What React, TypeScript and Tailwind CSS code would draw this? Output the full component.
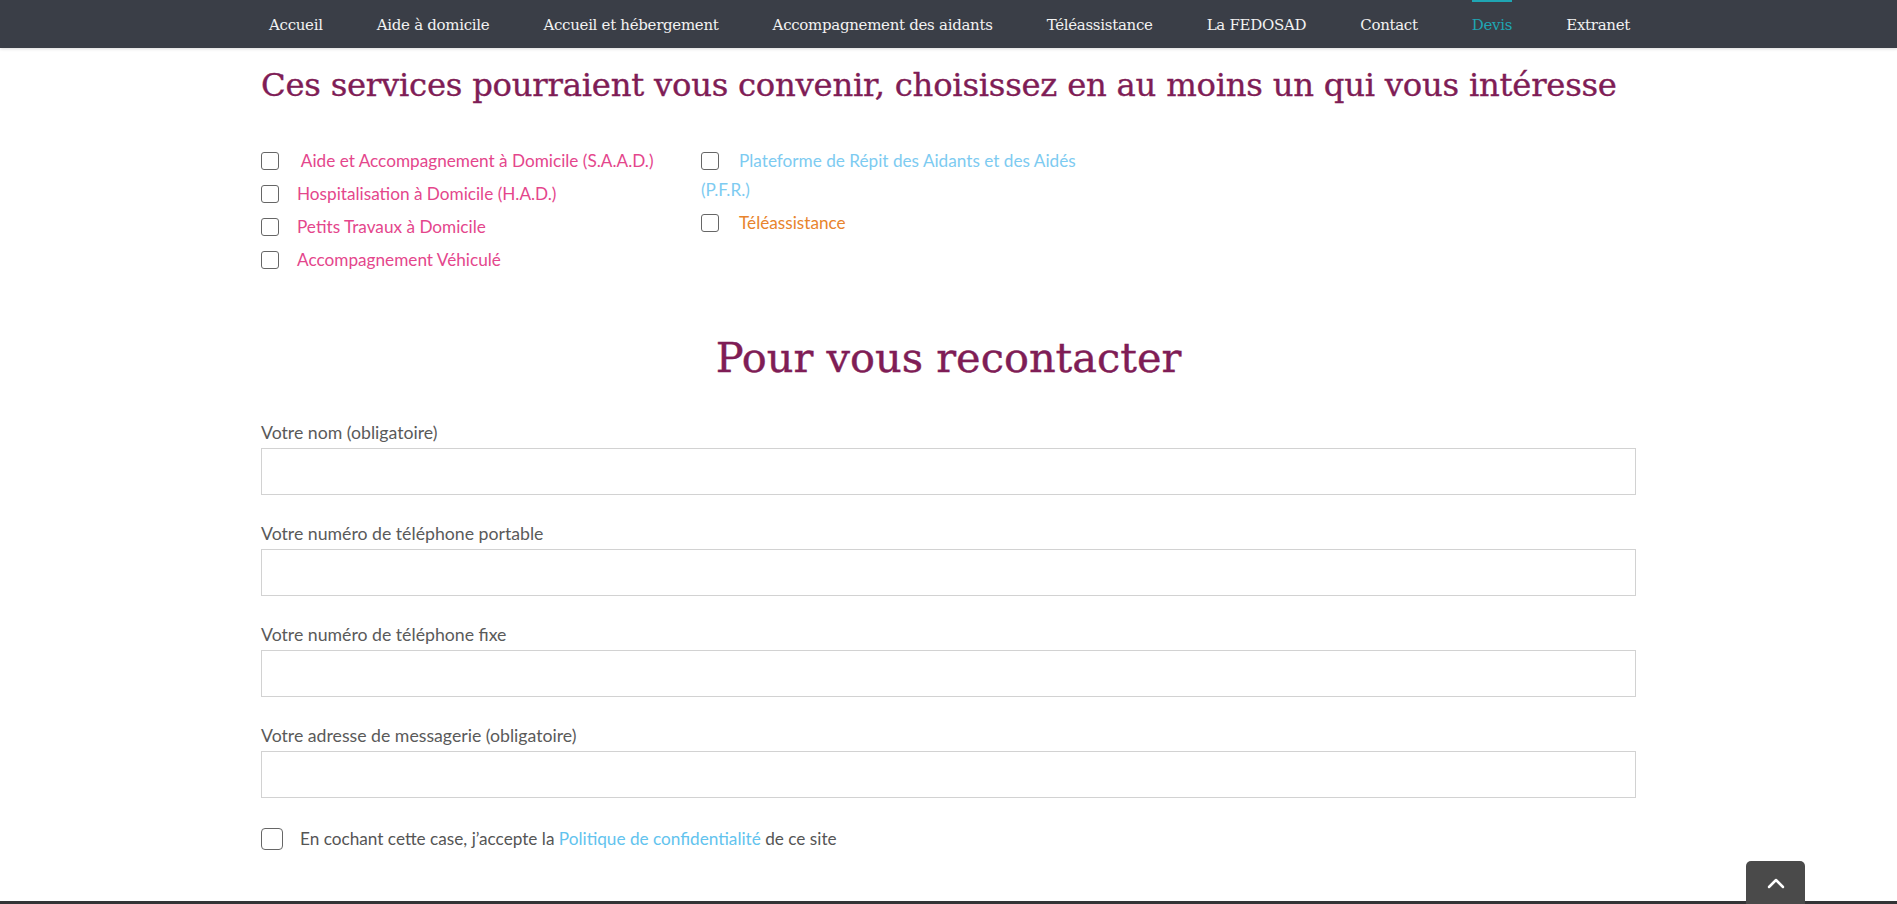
import React from "react";

const slab = { fontFamily: '"DejaVu Serif", "Liberation Serif", serif' };
const lato = { fontFamily: 'Lato, "Noto Sans", sans-serif' };

const navItems = [
  "Accueil",
  "Aide à domicile",
  "Accueil et hébergement",
  "Accompagnement des aidants",
  "Téléassistance",
  "La FEDOSAD",
  "Contact",
  "Devis",
  "Extranet",
];

function Box({ big }: { big?: boolean }) {
  return (
    <span
      className={
        big
          ? "inline-block w-[22px] h-[22px] shrink-0 rounded-[4px] border border-[#666] bg-white"
          : "inline-block w-[18px] h-[18px] shrink-0 rounded-[3px] border border-[#666] bg-white"
      }
    />
  );
}

function Field({ label }: { label: string }) {
  return (
    <div className="flex flex-col">
      <label className="text-[17.7px] leading-[22px] text-[#5a5a5a] mb-[4px]" style={lato}>
        {label}
      </label>
      <input className="h-[47px] w-full border border-[#d2d2d2] bg-white outline-none" />
    </div>
  );
}

export default function App() {
  return (
    <div className="min-h-[904px] bg-white relative overflow-hidden" style={lato}>
      <nav className="h-[48px] bg-[#3a3e47] shadow-[0_1px_3px_rgba(0,0,0,0.15)]">
        <ul className="ml-[269px] w-[1361px] h-full flex justify-between items-center pt-[2px]">
          {navItems.map((n) => (
            <li
              key={n}
              className={
                n === "Devis"
                  ? "relative h-full flex items-center text-[15px] text-[#1fa5b3]"
                  : "relative h-full flex items-center text-[15px] text-[#f2f2f2]"
              }
              style={{ ...slab, letterSpacing: "-0.3px" }}
            >
              {n === "Devis" && <span className="absolute -top-[2px] left-0 right-0 h-[2px] bg-[#1fa5b3]" />}
              {n}
            </li>
          ))}
        </ul>
      </nav>

      <main className="w-[1375px] mx-auto">
        <h2
          className="mt-[16px] text-[32.3px] leading-[42px] text-[#7f1d56] [-webkit-text-stroke:0.35px_#7f1d56]"
          style={{ ...slab, letterSpacing: "-0.25px" }}
        >
          Ces services pourraient vous convenir, choisissez en au moins un qui vous intéresse
        </h2>

        <div className="mt-[40px] flex gap-[20px] text-[17.2px]" style={lato}>
          <div className="w-[420px] flex flex-col gap-[4px]">
            <div className="flex items-center gap-[18px] leading-[29px] text-[#e4468c]">
              <Box />
              <span>&nbsp;Aide et Accompagnement à Domicile (S.A.A.D.)</span>
            </div>
            <div className="flex items-center gap-[18px] leading-[29px] text-[#e4468c]">
              <Box />
              <span>Hospitalisation à Domicile (H.A.D.)</span>
            </div>
            <div className="flex items-center gap-[18px] leading-[29px] text-[#e4468c]">
              <Box />
              <span>Petits Travaux à Domicile</span>
            </div>
            <div className="flex items-center gap-[18px] leading-[29px] text-[#e4468c]">
              <Box />
              <span>Accompagnement Véhiculé</span>
            </div>
          </div>
          <div className="w-[420px] flex flex-col gap-[4px]">
            <div className="leading-[29px] text-[#7dcbf1]">
              <span className="inline-block align-[-3px] -my-[6px] mr-[20px]">
                <Box />
              </span>
              Plateforme de Répit des Aidants et des Aidés (P.F.R.)
            </div>
            <div className="flex items-center gap-[20px] leading-[29px] text-[#e8842c]">
              <Box />
              <span>Téléassistance</span>
            </div>
          </div>
        </div>

        <h2
          className="mt-[54px] text-center text-[41.5px] leading-[60px] text-[#7f1d56] [-webkit-text-stroke:0.4px_#7f1d56]"
          style={slab}
        >
          Pour vous recontacter
        </h2>

        <form className="mt-[34px] flex flex-col gap-[28px]">
          <Field label="Votre nom (obligatoire)" />
          <Field label="Votre numéro de téléphone portable" />
          <Field label="Votre numéro de téléphone fixe" />
          <Field label="Votre adresse de messagerie (obligatoire)" />
        </form>

        <div className="mt-[28px] flex items-center gap-[17px] text-[17.2px] text-[#555]">
          <Box big />
          <span>
            En cochant cette case, j’accepte la <span className="text-[#62c3ee]">Politique de confidentialité</span> de
            ce site
          </span>
        </div>
      </main>

      <div className="absolute left-0 right-0 bottom-0 h-[3px] bg-[#333436]" />
      <button className="fixed right-[92px] bottom-0 w-[59px] h-[43px] rounded-t-[5px] bg-[#4a4a4a] flex items-center justify-center">
        <svg width="18" height="12" viewBox="0 0 18 12" fill="none">
          <path d="M2 10 L9 3 L16 10" stroke="white" strokeWidth="2.5" strokeLinecap="round" strokeLinejoin="round" />
        </svg>
      </button>
    </div>
  );
}
